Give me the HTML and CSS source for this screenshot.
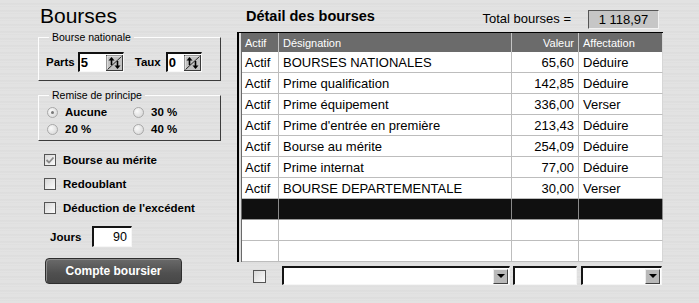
FILE: index.html
```html
<!DOCTYPE html>
<html>
<head>
<meta charset="UTF-8">
<title>Bourses</title>
<link rel="stylesheet" href="styles.css">
</head>
<body>
<div class="page">

	<!-- colonne de gauche -->
	<div class="left">
		<h1 class="title">Bourses</h1>

		<fieldset class="group group_nat">
			<legend>Bourse nationale</legend>
			<div class="spin_row">
				<span class="lbl">Parts</span>
				<span class="spin spin_parts">
					<span class="spin_val">5</span>
					<svg class="spin_btn" width="17" height="16" viewBox="0 0 17 16">
						<rect x="0.5" y="0.5" width="16" height="15" fill="#c2c2c2" stroke="#3a3a3a"/>
						<path d="M1 15V1H16" fill="none" stroke="#f4f4f4"/>
						<path d="M1.5 14.5L15.5 1.5" stroke="#2a2a2a"/>
						<path d="M5.5 4v6" stroke="#000" stroke-width="1.6"/>
						<path d="M5.5 2L2.5 5.5H8.5Z" fill="#000"/>
						<path d="M11.5 6v6" stroke="#000" stroke-width="1.6"/>
						<path d="M11.5 14L8.5 10.5H14.5Z" fill="#000"/>
					</svg>
				</span>
				<span class="lbl lbl_taux">Taux</span>
				<span class="spin spin_taux">
					<span class="spin_val">0</span>
					<svg class="spin_btn" width="17" height="16" viewBox="0 0 17 16">
						<rect x="0.5" y="0.5" width="16" height="15" fill="#c2c2c2" stroke="#3a3a3a"/>
						<path d="M1 15V1H16" fill="none" stroke="#f4f4f4"/>
						<path d="M1.5 14.5L15.5 1.5" stroke="#2a2a2a"/>
						<path d="M5.5 4v6" stroke="#000" stroke-width="1.6"/>
						<path d="M5.5 2L2.5 5.5H8.5Z" fill="#000"/>
						<path d="M11.5 6v6" stroke="#000" stroke-width="1.6"/>
						<path d="M11.5 14L8.5 10.5H14.5Z" fill="#000"/>
					</svg>
				</span>
			</div>
		</fieldset>

		<fieldset class="group group_remise">
			<legend>Remise de principe</legend>
			<div class="radios">
				<label class="opt"><span class="radio on"></span>Aucune</label>
				<label class="opt"><span class="radio"></span>30 %</label>
				<label class="opt"><span class="radio"></span>20 %</label>
				<label class="opt"><span class="radio"></span>40 %</label>
			</div>
		</fieldset>

		<div class="checks">
			<label class="opt">
				<span class="check">
					<svg width="12" height="12" viewBox="0 0 12 12"><path d="M2.5 6l2.5 2.5 4.5-5" fill="none" stroke="#8a8a8a" stroke-width="1.8"/></svg>
				</span>Bourse au mérite
			</label>
			<label class="opt"><span class="check"></span>Redoublant</label>
			<label class="opt"><span class="check"></span>Déduction de l'excédent</label>
		</div>

		<div class="jours_row">
			<span class="lbl lbl_jours">Jours</span>
			<span class="field jours">90</span>
		</div>

		<button class="btn_compte">Compte boursier</button>
	</div>

	<!-- détail des bourses -->
	<div class="right">
		<div class="right_head">
			<span class="sub_title">Détail des bourses</span>
			<span class="total_lbl">Total bourses =</span>
			<span class="total_val">1 118,97</span>
		</div>

		<div class="grid_wrap">
			<table class="grid">
				<colgroup>
					<col style="width:37px">
					<col style="width:233px">
					<col style="width:67px">
					<col style="width:84px">
				</colgroup>
				<tr class="head">
					<th>Actif</th><th>Désignation</th><th class="num">Valeur</th><th>Affectation</th>
				</tr>
				<tr><td>Actif</td><td>BOURSES NATIONALES</td><td class="num">65,60</td><td>Déduire</td></tr>
				<tr><td>Actif</td><td>Prime qualification</td><td class="num">142,85</td><td>Déduire</td></tr>
				<tr><td>Actif</td><td>Prime équipement</td><td class="num">336,00</td><td>Verser</td></tr>
				<tr><td>Actif</td><td>Prime d'entrée en première</td><td class="num">213,43</td><td>Déduire</td></tr>
				<tr><td>Actif</td><td>Bourse au mérite</td><td class="num">254,09</td><td>Déduire</td></tr>
				<tr><td>Actif</td><td>Prime internat</td><td class="num">77,00</td><td>Déduire</td></tr>
				<tr><td>Actif</td><td>BOURSE DEPARTEMENTALE</td><td class="num">30,00</td><td>Verser</td></tr>
				<tr class="sel"><td></td><td></td><td></td><td></td></tr>
				<tr><td></td><td></td><td></td><td></td></tr>
				<tr><td></td><td></td><td></td><td></td></tr>
			</table>
		</div>

		<div class="bottom_row">
			<span class="check check_small"></span>
			<span class="field combo combo_desig"><span class="drop"></span></span>
			<span class="field val_input"></span>
			<span class="field combo combo_affect"><span class="drop"></span></span>
		</div>
	</div>
</div>
</body>
</html>
```

FILE: styles.css
```css
body{
	margin:0;
	width:699px; height:303px; overflow:hidden;
	font-family:"Liberation Sans", Arial, sans-serif;
	color:#000;
	background-color:#e0e0e0;
	background-image:repeating-linear-gradient(180deg,
		#e2e2e2 0px, #e2e2e2 3px, #d9d9d9 4px, #e4e4e4 5px, #dedede 7px);
}
.page{
	display:flex;
}
.left{
	width:199px; padding-left:38px;
}
.right{
	width:426px;
}

/* titre */
.title{
	margin:4px 0 0 2px;
	font-size:21px; line-height:24px; font-weight:normal;
}

/* cadres */
.group{
	box-sizing:border-box; width:183px;
	margin:3px 0 0 0;
	border:1px solid;
	border-color:#fdfdfd #3c3c3c #3c3c3c #fdfdfd;
}
.group legend{
	font-size:10.5px; line-height:12px;
	padding:0 3px; margin-left:4px;
}
.group_nat{
	padding:9px 0 8px 6px;
}
.group_remise{
	margin-top:8px;
	padding:3px 0 3px 6px;
}

.lbl{
	font-size:11.5px; font-weight:bold;
}

/* champs numériques */
.spin_row{
	display:flex; align-items:center; height:20px;
	margin-left:1px;
}
.spin{
	box-sizing:border-box; height:20px;
	display:flex; align-items:center; justify-content:space-between;
	background:#fff;
	border-style:solid; border-width:2px 1px 1px 2px;
	border-color:#111 #f8f8f8 #f8f8f8 #111;
	padding:0 0 0 1px;
}
.spin_parts{ width:46px; margin-left:3px; }
.spin_taux{ width:36px; margin-left:5px; }
.lbl_taux{ margin-left:11px; }
.spin_val{
	font-size:13px; font-weight:bold;
}
.spin_btn{ display:block; }

/* boutons radio */
.radios{
	display:grid; grid-template-columns:86px 1fr;
	grid-auto-rows:16px; row-gap:1px;
	margin-left:2px;
}
.opt{
	display:flex; align-items:center;
	font-size:11.5px; font-weight:bold;
}
.radio{
	box-sizing:border-box; width:11px; height:11px;
	border-radius:50%;
	border:1px solid #a8a8a8;
	background:radial-gradient(circle at 35% 35%, #fafafa, #d2d2d2);
	margin-right:7px;
	display:flex; align-items:center; justify-content:center;
}
.radio.on::after{
	content:""; width:3px; height:3px; border-radius:50%;
	background:#777;
}

/* cases à cocher */
.checks{
	margin:9px 0 0 6px;
	display:flex; flex-direction:column; gap:4px;
}
.checks .opt{ height:20px; }
.check{
	box-sizing:border-box; width:12px; height:12px;
	border:1px solid #555;
	background:linear-gradient(135deg, #d8d8d8, #fbfbfb);
	margin-right:7px;
	display:flex;
}
.check svg{ display:block; margin:-1px; }

/* jours */
.jours_row{
	display:flex; align-items:center;
	margin-top:8px;
}
.lbl_jours{ width:42px; margin-left:12px; }
.field{
	box-sizing:border-box; display:block;
	background:#fff;
	border-style:solid; border-width:2px 1px 1px 2px;
	border-color:#141414 #f6f6f6 #f6f6f6 #141414;
}
.jours{
	width:40px; height:21px;
	font-size:12.5px; line-height:18px;
	text-align:right; padding-right:4px;
}

/* bouton */
.btn_compte{
	display:block;
	width:137px; height:26px;
	margin:11px 0 0 7px;
	border:1px solid #2e2e2e; border-radius:4px;
	background:linear-gradient(#6a6a6a, #4f4f4f 60%, #474747);
	box-shadow:inset 1px 1px 0 #8a8a8a;
	color:#fff;
	font-family:"Liberation Sans", Arial, sans-serif;
	font-size:12px; font-weight:bold;
	padding:0;
}

/* entête droite */
.right_head{
	box-sizing:border-box; height:32px;
	display:flex; align-items:flex-start;
	padding-top:6px;
}
.sub_title{
	margin:2px 0 0 9px;
	font-size:14.5px; line-height:16px; font-weight:bold;
}
.total_lbl{
	margin:5px 0 0 auto;
	font-size:13px; line-height:16px;
}
.total_val{
	box-sizing:border-box;
	width:71px; height:19px;
	margin:4px 4px 0 17px;
	background:#c6c6c6;
	border-style:solid; border-width:1px;
	border-color:#555 #f2f2f2 #f2f2f2 #555;
	font-size:13px; line-height:17px; text-align:center;
}

/* tableau */
.grid_wrap{
	border-left:2px solid #000;
	border-top:1px solid #000;
	padding-left:2px;
	background:#dcdcdc;
}
.grid{
	width:422px;
	table-layout:fixed;
	border-collapse:separate; border-spacing:0;
	border-left:1px solid #6a6a6a;
	background:#fff;
}
.grid tr{ height:21px; }
.grid tr.head{ height:19px; }
.grid th{
	background:#6b6b6b; color:#fff;
	font-size:11px; font-weight:normal;
	text-align:left;
	padding:0 4px;
	border-right:1px solid #c4c4c4;
	white-space:nowrap;
}
.grid th:first-child{ padding-left:3px; }
.grid td{
	font-size:13px;
	padding:0 4px;
	border-right:1px solid #bdbdbd;
	border-bottom:1px solid #bdbdbd;
	white-space:nowrap; overflow:hidden;
}
.grid td:first-child{ padding-left:3px; }
.grid th:last-child, .grid td:last-child{ border-right-color:#d6d6d6; }
.grid .num{ text-align:right; }
.grid tr.sel td{
	background:#101010;
	border-bottom-color:#9a9a9a;
	border-right-color:#8a8a8a;
}

/* ligne de saisie */
.bottom_row{
	display:flex; align-items:flex-start;
	margin-top:4px; height:19px;
}
.check_small{
	width:13px; height:13px;
	margin:4px 0 0 16px;
}
.combo{
	height:19px;
	display:flex; justify-content:flex-end; align-items:center;
	padding-right:1px;
}
.combo_desig{ width:228px; margin-left:16px; }
.val_input{ width:64px; height:19px; margin-left:3px; }
.combo_affect{ width:81px; margin-left:4px; }
.drop{
	box-sizing:border-box;
	width:15px; height:15px;
	background:#b9b9b9;
	border:1px solid;
	border-color:#ededed #444 #444 #ededed;
	display:flex; align-items:center; justify-content:center;
}
.drop::after{
	content:"";
	border-left:4px solid transparent;
	border-right:4px solid transparent;
	border-top:4px solid #000;
}
```
